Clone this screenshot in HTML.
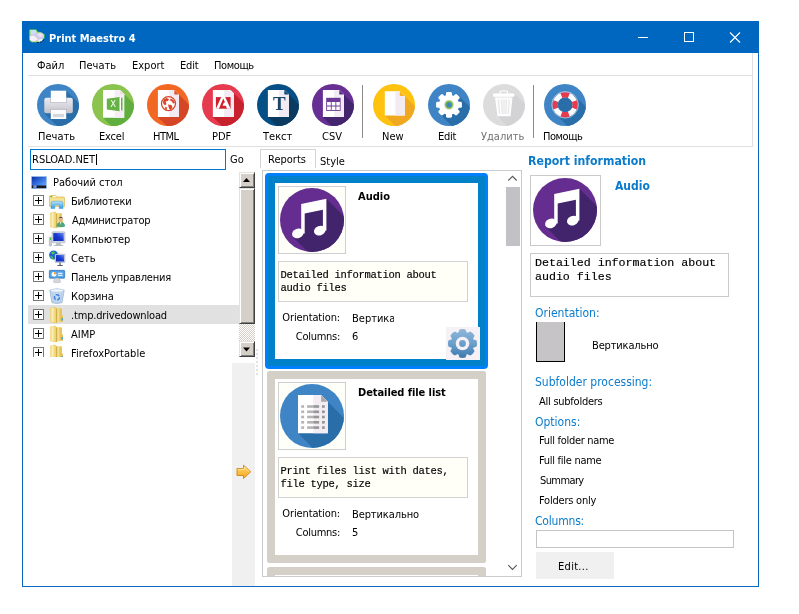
<!DOCTYPE html>
<html lang="ru">
<head>
<meta charset="utf-8">
<title>Print Maestro 4</title>
<style>
html,body{margin:0;padding:0;background:#fff;}
body{will-change:transform;width:799px;height:614px;position:relative;overflow:hidden;font-family:"DejaVu Sans Condensed","DejaVu Sans","Liberation Sans",sans-serif;font-size:11px;color:#000;}
.a{position:absolute;}
.t{position:absolute;white-space:nowrap;line-height:13px;height:13px;font-size:11px;}
.b{font-weight:bold;}
.blue{color:#0b7bcb;}
.mono{font-family:"Liberation Mono","DejaVu Sans Mono",monospace;}
#win{left:22px;top:21px;width:735px;height:564px;border:1px solid #0868c0;background:#fff;}
#title{left:22px;top:21px;width:737px;height:32px;background:#0067c0;}
.hl{background:#e2e2e2;}
.line{background:#e0e0e0;}
svg{position:absolute;overflow:visible;}
</style>
</head>
<body>
<!-- window frame -->
<div class="a" id="win"></div>
<div class="a" id="title"></div>
<svg style="left:29px;top:29px" width="16" height="14" viewBox="0 0 16 14">
 <path d="M.3 .5H7.300L8.300 2.500 11.500 3.200 15.500 5.200V9L13.500 11 11 13.200H2.500L.3 11.200z" fill="#82e02c"/>
 <path d="M1.300 1H7L8.500 6.500 1.800 7z" fill="#c9e0fb"/>
 <path d="M.8 6.500Q4 4.500 8.500 3.800L12.500 3.600 15 5.800V8.800L11.500 11.500 6.500 12.800H2.800L.8 10.800z" fill="#cfcae6"/>
 <path d="M1 7.500L5 6.500 9 10.500 5.500 12.300H3L1 10.500z" fill="#f4f1fa"/>
 <path d="M8 5L12 4.200 14.500 6.500 11 8.500z" fill="#e6e2f3"/>
 <path d="M8.500 12.500L10.500 10.300 13.800 9.800 12.800 12.200z" fill="#e9f5ff"/>
 <path d="M8 13.500h2M11 13.300l1.800-.6M13.500 12l1.500-1.300" stroke="#1a1466" stroke-width=".9" fill="none"/>
</svg>
<div class="t b" style="left:49px;top:32px;color:#fff;">Print Maestro 4</div>

<!-- caption buttons -->
<svg style="left:630px;top:21px" width="129" height="32" viewBox="0 0 129 32">
 <path d="M8 16.5h10" stroke="#fff" stroke-width="1" fill="none"/>
 <rect x="54.5" y="11.5" width="9" height="9" stroke="#fff" stroke-width="1" fill="none"/>
 <path d="M100 11.500l10 10M110 11.500l-10 10" stroke="#fff" stroke-width="1.1" fill="none"/>
</svg>

<!-- menu -->
<div class="t" style="left:37px;top:59px;">Файл</div>
<div class="t" style="left:79px;top:59px;">Печать</div>
<div class="t" style="left:132px;top:59px;">Export</div>
<div class="t" style="left:180px;top:59px;letter-spacing:-.2px;">Edit</div>
<div class="t" style="left:214px;top:59px;letter-spacing:-.4px;">Помощь</div>
<div class="a line" style="left:28px;top:75px;width:725px;height:1px;"></div>
<div class="a line" style="left:28px;top:146px;width:725px;height:1px;"></div>
<div class="a line" style="left:752px;top:53px;width:1px;height:94px;"></div>

<!-- TOOLBAR -->
<div id="toolbar">
<svg width="0" height="0" style="left:0;top:0"><defs>
<clipPath id="cc"><circle cx="21" cy="21" r="21"/></clipPath>
<clipPath id="c64"><circle cx="32" cy="32" r="32"/></clipPath>
<g id="icoAudio">
 <circle cx="32" cy="32" r="32" fill="#662d91"/>
 <g clip-path="url(#c64)"><path d="M46.400 10.700L96.400 60.700L63.500 99.500L13.500 49.500L24 45V25z" fill="#41246b"/></g>
 <path d="M21.200 15.900L46.400 10.700V42.500H42.900V21.800L24.700 25.500V45.500H21.200z" fill="#fff"/>
 <ellipse cx="17.900" cy="45.300" rx="6" ry="4.700" transform="rotate(-22 17.900 45.300)" fill="#fff"/>
 <ellipse cx="39.800" cy="42.600" rx="6" ry="4.700" transform="rotate(-22 39.800 42.600)" fill="#fff"/>
</g>
<g id="icoList">
 <circle cx="32" cy="32" r="32" fill="#3f85c5"/>
 <g clip-path="url(#c64)"><path d="M41.100 11L91.100 61L68 99.300L18 49.300z" fill="#2a6ea9"/></g>
 <path d="M18 11H41.100L47.800 17.700V49.300H18z" fill="#fff"/>
 <path d="M33.300 11H41.100L47.800 17.700V49.300H33.300z" fill="#f3edf3"/>
 <path d="M41.100 11L47.800 17.700H41.100z" fill="#a9a9a9"/>
 <g fill="#b4b4b4"><rect x="21.200" y="21.200" width="2.900" height="2.600"/><rect x="21.200" y="26.500" width="2.900" height="2.600"/><rect x="21.200" y="31.700" width="2.900" height="2.600"/><rect x="21.200" y="37" width="2.900" height="2.600"/><rect x="21.200" y="42.300" width="2.900" height="2.600"/>
 <rect x="27.100" y="21.200" width="6.200" height="2.600"/><rect x="27.100" y="26.500" width="6.200" height="2.600"/><rect x="27.100" y="31.700" width="6.200" height="2.600"/><rect x="27.100" y="37" width="6.200" height="2.600"/><rect x="27.100" y="42.300" width="6.200" height="2.600"/></g>
 <g fill="#969696"><rect x="33.300" y="21.200" width="5.800" height="2.600"/><rect x="33.300" y="26.500" width="5.800" height="2.600"/><rect x="33.300" y="31.700" width="5.800" height="2.600"/><rect x="33.300" y="37" width="5.800" height="2.600"/><rect x="33.300" y="42.300" width="5.800" height="2.600"/>
 <rect x="42" y="21.200" width="2.800" height="2.600"/><rect x="42" y="26.500" width="2.800" height="2.600"/><rect x="42" y="31.700" width="2.800" height="2.600"/><rect x="42" y="37" width="2.800" height="2.600"/><rect x="42" y="42.300" width="2.800" height="2.600"/></g>
</g>
<linearGradient id="gPr" x1="0" y1="0" x2="0" y2="1"><stop offset="0" stop-color="#ececf2"/><stop offset="1" stop-color="#c4c2c8"/></linearGradient>
<linearGradient id="gGear" x1="0" y1="0" x2="0" y2="1"><stop offset="0" stop-color="#8ab4d8"/><stop offset="1" stop-color="#3a78ae"/></linearGradient>
<linearGradient id="gArr" x1="0" y1="0" x2="0" y2="1"><stop offset="0" stop-color="#ffd868"/><stop offset="1" stop-color="#f7a823"/></linearGradient>
</defs></svg>

<!-- Print -->
<svg style="left:37px;top:84px" width="42" height="42" viewBox="0 0 42 42">
 <circle cx="21" cy="21" r="21" fill="#3f85c5"/>
 <g clip-path="url(#cc)">
  <path d="M29.200 6.700L79.200 56.700L57.300 79.200L7.300 29.200z" fill="#2a6ea9"/>
 </g>
 <rect x="7.300" y="13.800" width="28.500" height="15.400" rx="2" fill="url(#gPr)"/>
 <rect x="13.800" y="6.700" width="15.400" height="11.600" fill="#fff"/>
 <rect x="13.800" y="25.600" width="15.400" height="9.400" fill="#fcfcfe"/>
 <rect x="16" y="29.900" width="11" height="3.200" fill="#d6d6dc"/>
 <path d="M13.500 13.800V18.500H29.500V13.800" fill="none" stroke="#b4b4c2" stroke-width=".6"/>
 <path d="M13.500 29.200V25.400H29.500V29.200" fill="none" stroke="#a9a9b6" stroke-width=".6"/>
</svg>
<div class="t" style="left:38px;top:130px;">Печать</div>

<!-- Excel -->
<svg style="left:92px;top:84px" width="42" height="42" viewBox="0 0 42 42">
 <circle cx="21" cy="21" r="21" fill="#8bc34f"/>
 <g clip-path="url(#cc)"><path d="M28 6L78 56L61 83.700L11 33.700z" fill="#5fae3e"/></g>
 <path d="M11 6H28L32.200 10.200V33.700H11z" fill="#fff"/>
 <path d="M22.600 6H28L32.200 10.200V33.700H22.600z" fill="#f5eff5"/>
 <path d="M28 6L32.200 10.200H28z" fill="#e6e1e8"/>
 <path d="M14.800 14.700L27.700 12.900V27.200L14.800 25.400z" fill="#66b245"/>
 <rect x="27.700" y="13.600" width="1.300" height="12.900" fill="#fff"/>
 <rect x="29" y="13.600" width="1.500" height="12.900" fill="#66b245"/>
 <text x="21.300" y="23.200" font-size="9.500" font-weight="normal" text-anchor="middle" fill="#fff" font-family="'DejaVu Sans Condensed','Liberation Sans',sans-serif">X</text>
</svg>
<div class="t" style="left:99px;top:130px;letter-spacing:-.2px;">Excel</div>

<!-- HTML -->
<svg style="left:147px;top:84px" width="42" height="42" viewBox="0 0 42 42">
 <circle cx="21" cy="21" r="21" fill="#f26722"/>
 <g clip-path="url(#cc)"><path d="M27.300 6L77.300 56L60.900 83.100L10.900 33.100z" fill="#d44625"/></g>
 <path d="M10.900 6H27.300L32 10.500V33.100H10.900z" fill="#fff"/>
 <path d="M22.100 6H27.300L32 10.500V33.100H22.100z" fill="#f3ebf3"/>
 <path d="M27.300 6L32 10.500H27.300z" fill="#e2552a"/>
 <circle cx="21.500" cy="19.600" r="7" fill="#fff" stroke="#d8452b" stroke-width="1.300"/>
 <path d="M16.500 15.500l3-1.500 2.500 1-1 2-2.500.5 1 2.500-1.500 1.500-2-2.500zM23.500 14.500l3 1.500 1.500 3-2 .500-1-2-2-1zM21 20.500l3.500.5 1 2.500-2 2.500-1.500-1.500zM18.500 22.500l1.500 1-.500 2.500-1.500-1.500z" fill="#d8452b"/>
</svg>
<div class="t" style="left:153px;top:130px;letter-spacing:-.5px;">HTML</div>

<!-- PDF -->
<svg style="left:202px;top:84px" width="42" height="42" viewBox="0 0 42 42">
 <circle cx="21" cy="21" r="21" fill="#e63b4e"/>
 <g clip-path="url(#cc)"><path d="M28.500 6L78.500 56L60.900 83.100L10.900 33.100z" fill="#c6212c"/></g>
 <path d="M10.900 6H28.500L32 9.500V33.100H10.900z" fill="#fff"/>
 <path d="M22.100 6H28.500L32 9.500V33.100H22.100z" fill="#f3ebf3"/>
 <rect x="13.900" y="13.100" width="14.700" height="11.600" fill="#d0202e"/>
 <path d="M19.300 13.100h3.900l5.400 11.600h-3.600l-1.200-2.900h-3.300l1.500-3.200 1.100 0-1.850-4.100-4.350 10.200H13.900z" fill="#fff"/>
</svg>
<div class="t" style="left:212px;top:130px;">PDF</div>

<!-- Text -->
<svg style="left:257px;top:84px" width="42" height="42" viewBox="0 0 42 42">
 <circle cx="21" cy="21" r="21" fill="#044f85"/>
 <g clip-path="url(#cc)"><path d="M27.300 6L77.300 56L60.900 83.100L10.900 33.100z" fill="#0a3a5f"/></g>
 <path d="M10.900 6H27.300L32 10.500V33.100H10.900z" fill="#fff"/>
 <path d="M22.100 6H27.300L32 10.500V33.100H22.100z" fill="#f3ebf3"/>
 <path d="M27.300 6L32 10.500H27.300z" fill="#0d4a77"/>
 <text x="22.300" y="26.400" font-size="19" font-weight="bold" text-anchor="middle" fill="#1b4567" font-family="'Liberation Serif','DejaVu Serif',serif">T</text>
</svg>
<div class="t" style="left:263px;top:130px;">Текст</div>

<!-- CSV -->
<svg style="left:312px;top:84px" width="42" height="42" viewBox="0 0 42 42">
 <circle cx="21" cy="21" r="21" fill="#672e93"/>
 <g clip-path="url(#cc)"><path d="M27.300 6L77.300 56L60.900 83.100L10.900 33.100z" fill="#43246d"/></g>
 <path d="M10.900 6H27.300L32 10.500V33.100H10.900z" fill="#fff"/>
 <path d="M22.100 6H27.300L32 10.500V33.100H22.100z" fill="#f3ebf3"/>
 <path d="M27.300 6L32 10.500H27.300z" fill="#532a80"/>
 <rect x="14.200" y="13.800" width="14.400" height="13.100" fill="#6d3a98"/>
 <g fill="#fff"><rect x="15.100" y="18" width="3.700" height="3.500"/><rect x="19.700" y="18" width="3.700" height="3.500"/><rect x="24.300" y="18" width="3.500" height="3.500"/>
 <rect x="15.100" y="22.500" width="3.700" height="3.500"/><rect x="19.700" y="22.500" width="3.700" height="3.500"/><rect x="24.300" y="22.500" width="3.500" height="3.500"/></g>
</svg>
<div class="t" style="left:322px;top:130px;">CSV</div>

<div class="a" style="left:362px;top:85px;width:1px;height:53px;background:#8c8c8c;"></div>

<!-- New -->
<svg style="left:373px;top:84px" width="42" height="42" viewBox="0 0 42 42">
 <circle cx="21" cy="21" r="21" fill="#ffc20e"/>
 <g clip-path="url(#cc)"><path d="M26.800 7.200L76.800 57.200L61.800 81.500L11.800 31.500z" fill="#f0a823"/></g>
 <path d="M11.800 7.200H26.800L31.800 12V31.500H11.800z" fill="#fff"/>
 <path d="M22.300 7.200H26.800L31.800 12V31.500H22.300z" fill="#f3ebf3"/>
 <path d="M26.800 7.200L31.800 12H26.800z" fill="#f5b320"/>
</svg>
<div class="t" style="left:382px;top:130px;">New</div>

<!-- Edit -->
<svg style="left:428px;top:84px" width="42" height="42" viewBox="0 0 42 42">
 <circle cx="21" cy="21" r="21" fill="#3f85c5"/>
 <g clip-path="url(#cc)"><path d="M30.300 11.500L80.300 61.500L61.700 80.100L11.700 30.100z" fill="#2a6ea9"/></g>
 <g transform="translate(21 20.800)" fill="#fff">
  <circle r="10.100"/>
  <g id="tooth"><rect x="-3" y="-12.900" width="6" height="6" rx="1.400"/></g>
  <use href="#tooth" transform="rotate(45)"/><use href="#tooth" transform="rotate(90)"/><use href="#tooth" transform="rotate(135)"/>
  <use href="#tooth" transform="rotate(180)"/><use href="#tooth" transform="rotate(225)"/><use href="#tooth" transform="rotate(270)"/><use href="#tooth" transform="rotate(315)"/>
  <circle r="5.200" fill="#e9e9ee"/><circle r="4.200" fill="#7cc143"/><circle r="2.600" fill="#3f85c5"/>
 </g>
</svg>
<div class="t" style="left:438px;top:130px;letter-spacing:-.3px;">Edit</div>

<!-- Delete (disabled) -->
<svg style="left:483px;top:84px" width="42" height="42" viewBox="0 0 42 42">
 <circle cx="21" cy="21" r="21" fill="#dddcdd"/>
 <g clip-path="url(#cc)"><path d="M31.400 9.500L81.400 59.500L64.500 82.300L14.500 32.300z" fill="#d3d2d4"/></g>
 <rect x="17" y="7" width="7.500" height="3.500" rx="1" fill="none" stroke="#fff" stroke-width="1.200"/>
 <rect x="10" y="9.500" width="21.400" height="3.300" rx=".8" fill="#fff"/>
 <path d="M12 13.500H29.500L27.500 32.300H14.500z" fill="#fdfdfd"/>
 <path d="M15.500 15.500l1 14.500M18.700 15.500l.5 14.500M21 15.500v14.500M23.300 15.500l-.5 14.500M26.200 15.500l-1 14.500" stroke="#e4e3e5" stroke-width="1.100" fill="none"/>
</svg>
<div class="t" style="left:481px;top:130px;color:#727272;">Удалить</div>

<div class="a" style="left:533px;top:85px;width:1px;height:53px;background:#8c8c8c;"></div>

<!-- Help -->
<svg style="left:544px;top:84px" width="42" height="42" viewBox="0 0 42 42">
 <circle cx="21" cy="21" r="21" fill="#3f85c5"/>
 <g clip-path="url(#cc)"><path d="M30.500 11.400L80.500 61.400L61.700 80.200L11.700 30.200z" fill="#2a6ea9"/></g>
 <g transform="translate(21.100 20.800)">
  <circle r="13.300" fill="none" stroke="#dbe7f3" stroke-width=".6"/>
  <circle r="9.900" fill="none" stroke="#fbfbfd" stroke-width="5.200"/>
  <g fill="none" stroke="#e63b4e" stroke-width="5.200">
   <path d="M-3.700 -9.180A9.900 9.900 0 0 1 3.700 -9.180"/><path d="M-3.700 9.180A9.900 9.900 0 0 0 3.700 9.180"/>
   <path d="M-9.180 -3.700A9.900 9.900 0 0 0 -9.180 3.700"/><path d="M9.180 -3.700A9.900 9.900 0 0 1 9.180 3.700"/>
  </g>
  <circle r="7.300" fill="#2a6ea9"/>
 </g>
</svg>
<div class="t" style="left:543px;top:130px;letter-spacing:-.45px;">Помощь</div>
</div>

<!-- LEFT -->
<div id="left">
<style>
.sb3d{position:absolute;box-sizing:border-box;background:#d4d0c8;border:1px solid;border-color:#e4e2dc #404040 #404040 #e4e2dc;box-shadow:inset 1px 1px 0 #fff,inset -1px -1px 0 #808080;}
.xp{position:absolute;left:33px;width:9px;height:9px;border:1px solid #767676;background:#fff;}
.xp:before{content:"";position:absolute;left:1px;top:4px;width:7px;height:1px;background:#000;}
.xp:after{content:"";position:absolute;left:4px;top:1px;width:1px;height:7px;background:#000;}
.tr{position:absolute;white-space:nowrap;line-height:13px;height:13px;font-size:11px;left:71px;}
</style>
<!-- path edit -->
<div class="a" style="left:30px;top:149px;width:194px;height:19px;border:1px solid #0078d7;background:#fff;"></div>
<div class="t" style="left:32px;top:153px;">RSLOAD.NET</div>
<div class="a" style="left:96px;top:154px;width:1px;height:11px;background:#000;"></div>
<div class="t" style="left:230px;top:153px;">Go</div>

<!-- tree -->
<div class="a" style="left:28px;top:172px;width:211px;height:185px;overflow:hidden;" id="tree">
<div class="a" style="left:0;top:133px;width:211px;height:19px;background:#e1e1e1;"></div>
</div>
<div class="a" id="treeitems" style="left:0;top:0;width:239px;height:357px;overflow:hidden;">
<div class="tr" style="left:53px;top:176px;">Рабочий стол</div>
<div class="xp" style="top:195px"></div><div class="tr" style="top:195px;letter-spacing:-.2px;">Библиотеки</div>
<div class="xp" style="top:214px"></div><div class="tr" style="top:214px;left:72px;letter-spacing:-.3px;">Администратор</div>
<div class="xp" style="top:233px"></div><div class="tr" style="top:233px;">Компьютер</div>
<div class="xp" style="top:252px"></div><div class="tr" style="top:252px;">Сеть</div>
<div class="xp" style="top:271px"></div><div class="tr" style="top:271px;letter-spacing:-.18px;">Панель управления</div>
<div class="xp" style="top:290px"></div><div class="tr" style="top:290px;letter-spacing:-.15px;">Корзина</div>
<div class="xp" style="top:309px"></div><div class="tr" style="top:309px;letter-spacing:-.17px;">.tmp.drivedownload</div>
<div class="xp" style="top:328px"></div><div class="tr" style="top:328px;">AIMP</div>
<div class="xp" style="top:347px"></div><div class="tr" style="top:347px;letter-spacing:.07px;">FirefoxPortable</div>
<svg width="0" height="0" style="left:0;top:0"><defs>
<linearGradient id="gScr" x1="0" y1="1" x2="1" y2="0"><stop offset="0" stop-color="#0a1eb4"/><stop offset=".55" stop-color="#1c3fd2"/><stop offset="1" stop-color="#6c8ef2"/></linearGradient>
<linearGradient id="gFol" x1="0" y1="0" x2="1" y2="0"><stop offset="0" stop-color="#e9c75c"/><stop offset=".4" stop-color="#f2d877"/><stop offset="1" stop-color="#e1b94d"/></linearGradient>
<linearGradient id="gFol2" x1="0" y1="0" x2="1" y2="0"><stop offset="0" stop-color="#f7e596"/><stop offset="1" stop-color="#f1d56f"/></linearGradient>
<linearGradient id="gLib" x1="0" y1="0" x2="0" y2="1"><stop offset="0" stop-color="#b8e2fa"/><stop offset="1" stop-color="#2f9ee0"/></linearGradient>
<g id="fold">
 <path d="M5.500 1.200L10.800 1.200Q11.800 1.300 11.800 2.300V14.600L6 16z" fill="url(#gFol)"/>
 <rect x="11.300" y="8.500" width="1.700" height="6.300" fill="#e4c159"/>
 <rect x="11.500" y="11" width="1.300" height="2.500" fill="#2f9de0"/>
 <path d="M.4 .9L5 0Q6.200 0 6.200 1.200V16L.4 14.900z" fill="url(#gFol2)" stroke="#e6c766" stroke-width=".5"/>
 <path d="M6.500 1.600V15.700" stroke="#c6a043" stroke-width=".7"/>
 <path d="M2.800 .9V14.900" stroke="#fffce6" stroke-width="1" opacity=".75"/>
 <path d="M8.500 1.500V15" stroke="#f8e49a" stroke-width="1.200" opacity=".7"/>
</g>
</defs></svg>
<!-- desktop -->
<svg style="left:31px;top:176px" width="16" height="13" viewBox="0 0 16 13">
 <defs><linearGradient id="gDesk" x1="0" y1="0" x2="1" y2="1"><stop offset="0" stop-color="#0a2fa4"/><stop offset=".5" stop-color="#3874e4"/><stop offset="1" stop-color="#7ab8ff"/></linearGradient></defs>
 <rect x="0" y="0" width="16" height="13" rx=".8" fill="#a9c5ea"/>
 <rect x=".9" y=".9" width="14.200" height="11.200" fill="url(#gDesk)"/>
 <rect x=".9" y="9.500" width="14.200" height="2.600" fill="#1c1a1c"/>
 <circle cx="3.900" cy="10.500" r="2" fill="#2f7fe6"/>
 <rect x="2.900" y="9.600" width="1" height="1" fill="#f04a28"/><rect x="3.900" y="10.300" width="1" height="1" fill="#f6d22c"/><rect x="2.900" y="10.700" width=".9" height=".8" fill="#49b8f0"/><rect x="3.950" y="9.500" width=".9" height=".8" fill="#5cc83c"/>
</svg>
<!-- libraries -->
<svg style="left:49px;top:195px" width="16" height="14" viewBox="0 0 16 14">
 <path d="M.5 1.500Q.5 .5 1.500 .5H6.500L8 2H14.500Q15.500 2 15.500 3V11.500H.5z" fill="#f1d678" stroke="#dcb95a" stroke-width=".7"/>
 <rect x="1.500" y="1" width="2" height="1" fill="#3fc43a"/><rect x="3.700" y="1" width="3" height="1" fill="#fff"/>
 <rect x="1" y="3.200" width="14" height="7.800" fill="#f7e398"/>
 <path d="M2 13.500V8Q2 6.200 4 6.200H12Q14 6.200 14 8V13.500H10.200V10H5.800V13.500z" fill="url(#gLib)" stroke="#3b9bdc" stroke-width=".5"/>
</svg>
<!-- user folder -->
<svg style="left:50px;top:212px" width="16" height="16" viewBox="0 0 16 16">
 <use href="#fold"/>
 <circle cx="10.700" cy="7" r="2.300" fill="#d9b48f"/><path d="M8.300 6.300Q10.700 3.300 13.100 6.300Q10.700 5.300 8.300 6.300z" fill="#4c3b2c"/>
 <path d="M6.500 14.500Q6.500 10 10.700 10Q15 10 15 14.500Q10.700 16 6.500 14.500z" fill="#4ea57a"/>
 <path d="M10 10h1.400l-.7 3z" fill="#e9f3ee"/>
</svg>
<!-- computer -->
<svg style="left:49px;top:231px" width="16" height="16" viewBox="0 0 16 16">
 <rect x="3" y=".8" width="13" height="11" rx=".8" fill="#cdd6e2" stroke="#9aa6b8" stroke-width=".5"/>
 <rect x="4.300" y="2" width="10.400" height="8" fill="url(#gScr)"/>
 <path d="M7.500 11.800h4l.8 2.200h2v1h-9.600v-1h2z" fill="#b9bec6"/>
 <rect x=".3" y="6" width="2.200" height="9" rx=".5" fill="#c9ccd2" stroke="#8c9098" stroke-width=".4"/><rect x=".9" y="7" width="1" height="2" fill="#39c23c"/>
</svg>
<!-- network -->
<svg style="left:49px;top:250px" width="16" height="17" viewBox="0 0 16 17">
 <circle cx="4.600" cy="5" r="4.500" fill="#1d63d8"/>
 <path d="M2 2.500Q4 1 6 2L5 4 3 4.500zM1 6l2.500.5 1 2.500L3 9.200zM6.500 5.500l2 .5L8 8.500 6 8z" fill="#4fc24a"/>
 <rect x="6" y="4" width="10" height="8.600" rx=".6" fill="#c5d0e0" stroke="#8e9ab0" stroke-width=".4"/>
 <rect x="7" y="5" width="8" height="6.500" fill="url(#gScr)"/>
 <path d="M10.500 12.600h1.200v2.400h2v1h-5.200v-1h2z" fill="#555c68"/>
</svg>
<!-- control panel -->
<svg style="left:49px;top:270px" width="16" height="13" viewBox="0 0 16 13">
 <rect x=".3" y=".3" width="15.400" height="8" rx=".8" fill="#3c8fdc" stroke="#2a6fb8" stroke-width=".6"/>
 <rect x="1.300" y="1.300" width="13.400" height="6" fill="#5aa8ea"/>
 <circle cx="5" cy="4.300" r="2.400" fill="#fff"/><path d="M5 4.300V1.900A2.400 2.400 0 0 1 7.400 4.300z" fill="#f29a2e"/>
 <rect x="9" y="2.800" width="4.500" height="1" fill="#fff"/><rect x="9" y="4.800" width="4.500" height="1" fill="#fff"/>
 <path d="M4.500 12.300Q4.500 8 8 8Q11.500 8 11.500 12.300Q8 13.300 4.500 12.300z" fill="#d4d6da" stroke="#a6a9b0" stroke-width=".4"/>
</svg>
<!-- recycle bin -->
<svg style="left:49px;top:288px" width="16" height="16" viewBox="0 0 16 16">
 <path d="M.8 2.200Q8 -.3 15.200 2.200L13 14.600Q8 16.300 3 14.600z" fill="#c6daf0" stroke="#8dabcb" stroke-width=".7"/>
 <ellipse cx="8" cy="2.500" rx="6.800" ry="1.600" fill="#eef5fc" stroke="#a9c3de" stroke-width=".5"/>
 <path d="M3.500 5l1 8.500M6.500 5.300l.3 9M9.500 5.300l-.3 9M12.500 5l-1 8.500" stroke="#a3c0de" stroke-width=".6" fill="none"/>
 <circle cx="8" cy="9.300" r="2.600" fill="none" stroke="#3f7fe0" stroke-width="1.400" stroke-dasharray="3.800 1.600"/>
</svg>
<!-- folders -->
<svg style="left:50px;top:307px" width="14" height="16" viewBox="0 0 14 16"><use href="#fold"/></svg>
<svg style="left:50px;top:326px" width="14" height="16" viewBox="0 0 14 16"><use href="#fold"/></svg>
<svg style="left:50px;top:345px" width="14" height="16" viewBox="0 0 14 16"><use href="#fold"/></svg>

</div>

<!-- classic scrollbar -->
<div class="a" style="left:239px;top:172px;width:16px;height:185px;background:repeating-conic-gradient(#fff 0 25%,#d4d0c8 0 50%) 0 0/2px 2px;"></div>
<div class="sb3d" style="left:239px;top:172px;width:16px;height:16px;"></div>
<div class="sb3d" style="left:239px;top:188px;width:16px;height:136px;"></div>
<div class="sb3d" style="left:239px;top:341px;width:16px;height:16px;"></div>
<svg style="left:239px;top:172px" width="16" height="185" viewBox="0 0 16 185">
 <path d="M4 10h7L7.500 6z" fill="#000"/>
 <path d="M4 175.500h7L7.500 179.500z" fill="#000"/>
</svg>

<!-- splitter strip -->
<div class="a" style="left:232px;top:363px;width:23px;height:223px;background:#f0f0f0;"></div>
<div class="a" style="left:256px;top:349px;width:2px;height:26px;background:repeating-linear-gradient(to bottom,#e3e3e3 0,#e3e3e3 2px,#fff 2px,#fff 4px);"></div>
<svg style="left:236px;top:464px" width="16" height="16" viewBox="0 0 16 16">
 <path d="M1 4.500h6.500V1.200L14.700 7.800 7.500 14.500V11.500H1z" fill="url(#gArr)" stroke="#d38b1e" stroke-width="1" stroke-linejoin="round"/>
 <path d="M1.800 5.300h6.500V3l5 4.500" fill="none" stroke="#fff3c8" stroke-width=".8" opacity=".8"/>
</svg>
</div>

<!-- MID -->
<div id="mid">
<style>
.imgbox{position:absolute;box-sizing:border-box;width:68px;height:68px;border:1px solid #cfcfcf;background:#fffffa;}
.desc{position:absolute;box-sizing:border-box;border:1px solid #d2d2d2;background:#fffff8;}
.mt{position:absolute;white-space:nowrap;font-family:"Liberation Mono","DejaVu Sans Mono",monospace;font-size:10.5px;line-height:13px;letter-spacing:-0.3px;-webkit-text-stroke:.15px #000;}
.lab{position:absolute;white-space:nowrap;line-height:13px;height:13px;font-size:11px;text-align:right;width:80px;}
</style>
<!-- tabs -->
<div class="a" style="left:260px;top:149px;width:54px;height:18px;border:1px solid #d4d4d4;border-bottom:none;background:#fff;"></div>
<div class="t" style="left:268px;top:153px;">Reports</div>
<div class="t" style="left:320px;top:155px;">Style</div>
<!-- panel frame -->
<div class="a" style="left:262px;top:170px;width:260px;height:407px;border:1px solid #cbcbcf;background:#fff;box-sizing:border-box;overflow:hidden;" id="midpanel"></div>
<div class="a" style="left:263px;top:171px;width:258px;height:405px;overflow:hidden;">
<div class="a" style="left:-263px;top:-171px;width:799px;height:614px;">

<!-- card 1 (selected) -->
<div class="a" style="left:265px;top:173px;width:223px;height:196px;border-radius:4px;background:#0080ff;"></div>
<div class="a" style="left:268px;top:176px;width:217px;height:190px;background:#0081c9;"></div>
<div class="a" style="left:275px;top:183px;width:203px;height:176px;background:#fff;"></div>
<div class="imgbox" style="left:278px;top:186px;"></div>
<svg style="left:280px;top:188px" width="64" height="64" viewBox="0 0 64 64"><use href="#icoAudio"/></svg>
<div class="t b" style="left:358px;top:190px;">Audio</div>
<div class="desc" style="left:278px;top:261px;width:190px;height:41px;"></div>
<div class="mt" style="left:280.500px;top:269px;">Detailed information about<br>audio files</div>
<div class="lab" style="left:260px;top:311px;letter-spacing:-.13px;">Orientation:</div>
<div class="t" style="left:352px;top:312px;width:42px;overflow:hidden;">Вертикально</div>
<div class="lab" style="left:260px;top:330px;letter-spacing:-.28px;">Columns:</div>
<div class="t" style="left:352px;top:330px;">6</div>
<div class="a" style="left:446px;top:327px;width:34px;height:33px;background:#f6f1f6;"></div>
<svg style="left:447.900px;top:329.400px" width="29" height="29" viewBox="-14.500 -14.500 29 29">
 <defs><linearGradient id="gG2" gradientUnits="userSpaceOnUse" x1="0" y1="-14.500" x2="0" y2="14.500"><stop offset="0" stop-color="#8fb7da"/><stop offset=".5" stop-color="#6c9fcb"/><stop offset="1" stop-color="#3c79ae"/></linearGradient>
 <mask id="mG2" maskUnits="userSpaceOnUse" x="-15" y="-15" width="30" height="30">
  <g fill="#fff">
   <circle r="11.400"/>
   <path id="gt2" d="M-4.500 -10L-3 -14.100Q0 -14.900 3 -14.100L4.500 -10z"/>
   <use href="#gt2" transform="rotate(45)"/><use href="#gt2" transform="rotate(90)"/><use href="#gt2" transform="rotate(135)"/>
   <use href="#gt2" transform="rotate(180)"/><use href="#gt2" transform="rotate(225)"/><use href="#gt2" transform="rotate(270)"/><use href="#gt2" transform="rotate(315)"/>
  </g>
  <circle r="6.800" fill="#000"/><circle r="3.400" fill="#fff"/>
 </mask></defs>
 <rect x="-15" y="-15" width="30" height="30" fill="url(#gG2)" mask="url(#mG2)"/>
</svg>

<!-- card 2 -->
<div class="a" style="left:267px;top:371px;width:219px;height:192px;border-radius:2.500px;background:#d4d0c8;"></div>
<div class="a" style="left:275px;top:379px;width:203px;height:176px;background:#fff;"></div>
<div class="imgbox" style="left:278px;top:382px;"></div>
<svg style="left:280px;top:384px" width="64" height="64" viewBox="0 0 64 64"><use href="#icoList"/></svg>
<div class="t b" style="left:358px;top:386px;letter-spacing:-.07px;">Detailed file list</div>
<div class="desc" style="left:278px;top:457px;width:190px;height:41px;"></div>
<div class="mt" style="left:280.500px;top:465px;">Print files list with dates,<br>file type, size</div>
<div class="lab" style="left:260px;top:507px;letter-spacing:-.13px;">Orientation:</div>
<div class="t" style="left:352px;top:508px;letter-spacing:-.1px;">Вертикально</div>
<div class="lab" style="left:260px;top:526px;letter-spacing:-.28px;">Columns:</div>
<div class="t" style="left:352px;top:526px;">5</div>

<!-- card 3 (clipped) -->
<div class="a" style="left:267px;top:567px;width:219px;height:192px;border-radius:2.500px;background:#d4d0c8;"></div>
<div class="a" style="left:275px;top:575px;width:203px;height:176px;background:#fff;"></div>

<!-- win10 scrollbar -->
<div class="a" style="left:506px;top:187px;width:14px;height:59px;background:#c2c1c5;"></div>
<svg style="left:505px;top:171px" width="16" height="405" viewBox="0 0 16 405">
 <path d="M3.300 9.500L7.500 5.300 11.700 9.500" fill="none" stroke="#5a5a5a" stroke-width="1.100"/>
 <path d="M3.300 394.200L7.500 398.400 11.700 394.200" fill="none" stroke="#5a5a5a" stroke-width="1.100"/>
</svg>
</div></div>
</div>

<!-- RIGHT -->
<div id="right">
<style>
.h{position:absolute;white-space:nowrap;line-height:15px;height:15px;font-size:12px;color:#0b7bcb;}
</style>
<div class="h b" style="left:528px;top:154px;font-size:12.2px;">Report information</div>
<div class="a" style="left:530px;top:175px;width:69px;height:69px;border:1px solid #cacaca;background:#fff;"></div>
<svg style="left:533px;top:178px" width="64" height="64" viewBox="0 0 64 64"><use href="#icoAudio"/></svg>
<div class="h b" style="left:615px;top:179px;">Audio</div>
<div class="a" style="left:530px;top:253px;width:197px;height:42px;border:1px solid #cacaca;background:#fff;"></div>
<div class="mt" style="left:535px;top:256px;font-size:11.67px;line-height:14px;letter-spacing:-.03px;">Detailed information about<br>audio files</div>
<div class="h" style="left:535px;top:306px;">Orientation:</div>
<div class="a" style="left:536px;top:322px;width:27px;height:39px;border:1px solid #000;border-top:none;background:#c7c4c7;"></div>
<div class="t" style="left:592px;top:339px;letter-spacing:-.15px;">Вертикально</div>
<div class="h" style="left:535px;top:375px;">Subfolder processing:</div>
<div class="t" style="left:539px;top:395px;letter-spacing:-.25px;">All subfolders</div>
<div class="h" style="left:535px;top:415px;">Options:</div>
<div class="t" style="left:539px;top:434px;letter-spacing:-.3px;">Full folder name</div>
<div class="t" style="left:539px;top:454px;letter-spacing:-.28px;">Full file name</div>
<div class="t" style="left:540px;top:474px;letter-spacing:-.6px;">Summary</div>
<div class="t" style="left:539px;top:494px;letter-spacing:-.22px;">Folders only</div>
<div class="h" style="left:535px;top:514px;letter-spacing:-.2px;">Columns:</div>
<div class="a" style="left:536px;top:530px;width:196px;height:16px;border:1px solid #c4c4c4;background:#fff;"></div>
<div class="a" style="left:536px;top:552px;width:78px;height:27px;background:#f0f0f0;"></div>
<div class="t" style="left:558px;top:560px;letter-spacing:.3px;">Edit...</div>
</div>

</body>
</html>
